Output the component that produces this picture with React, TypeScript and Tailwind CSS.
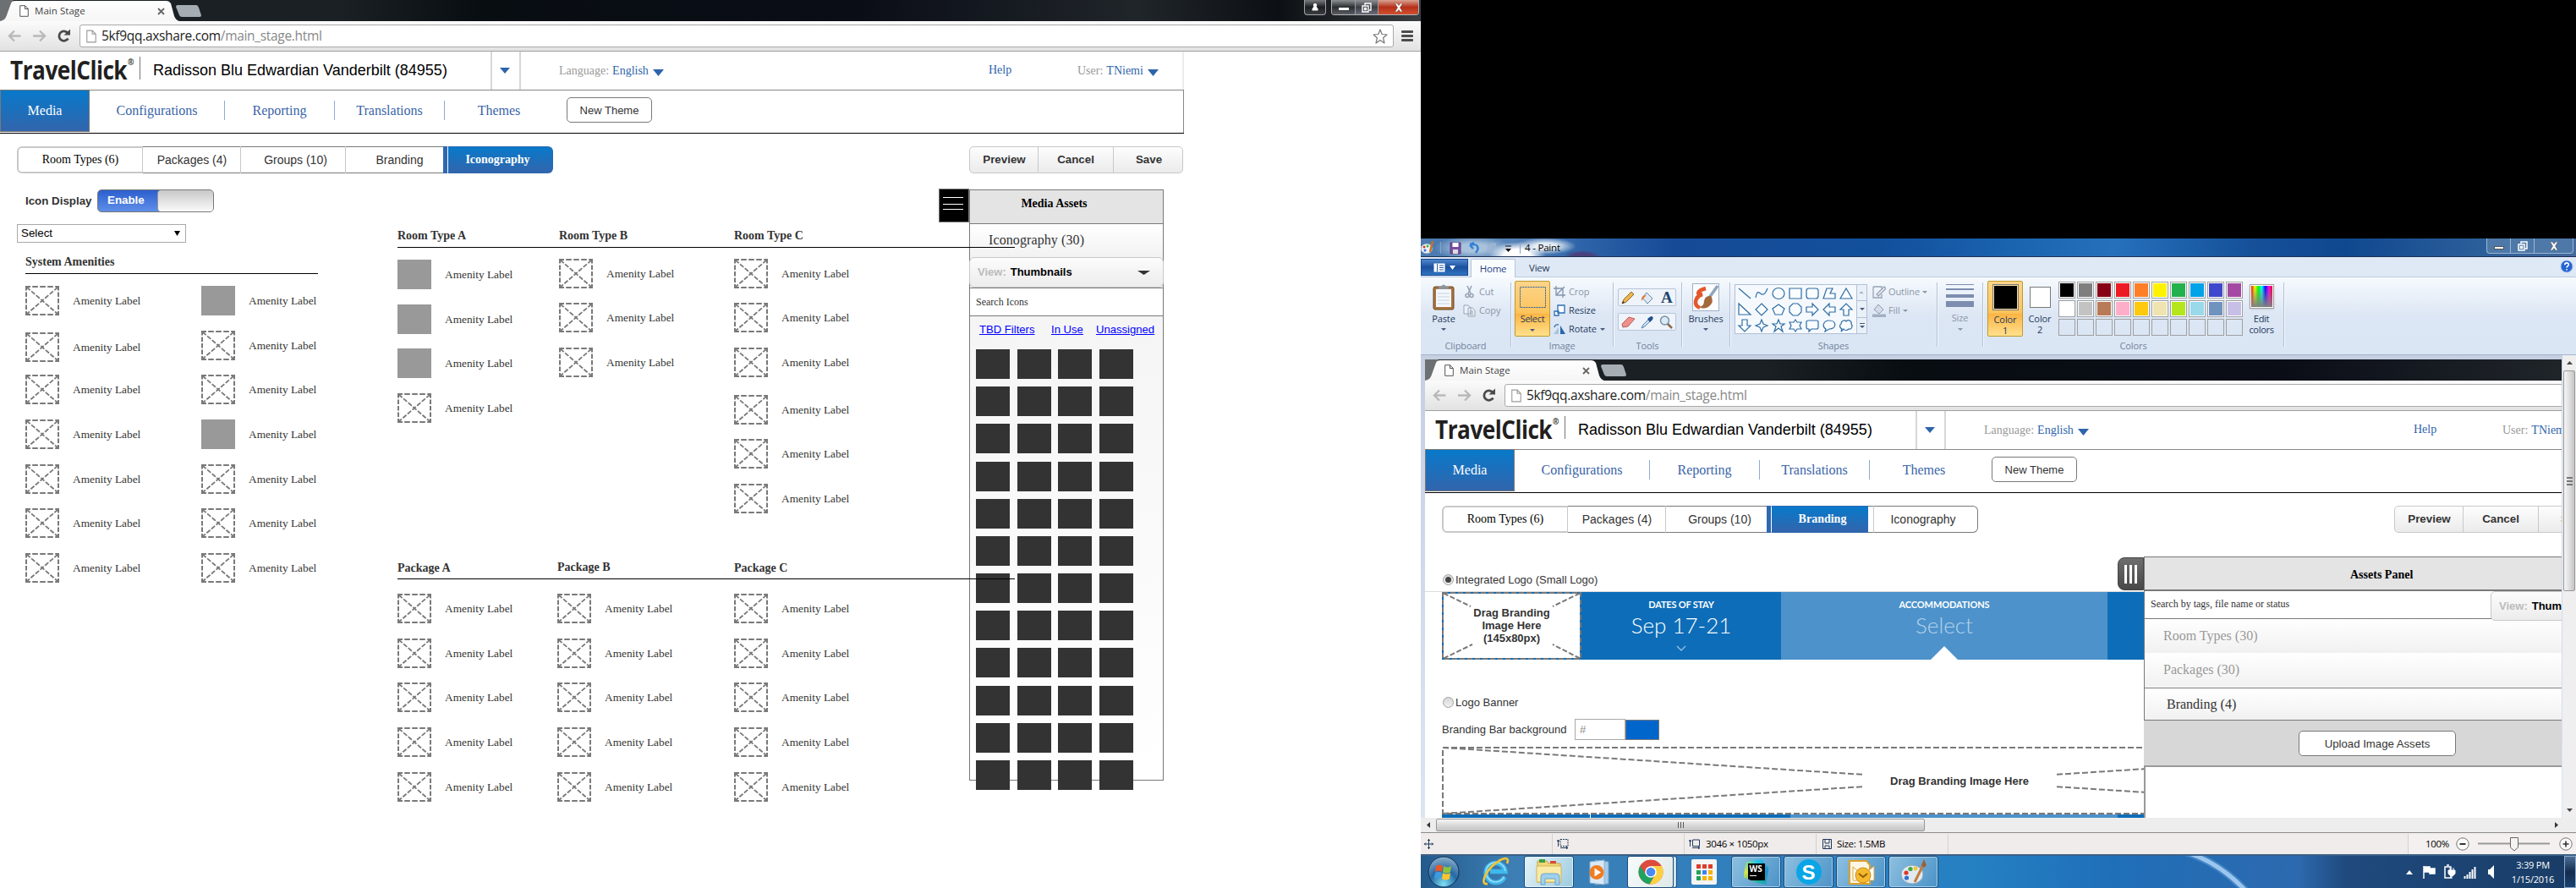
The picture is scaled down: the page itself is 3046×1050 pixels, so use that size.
import React from 'react';

type Kids = { children?: React.ReactNode };

/* ---------- wireframe atoms ---------- */

const Placeholder = () => (
  <svg width="40" height="35" viewBox="0 0 40 35" className="shrink-0" fill="none" stroke="#797979" strokeWidth="2">
    <path d="M1 1H39" strokeDasharray="5 2.2 6.6 2.4 6.6 2.4 6.6 2.4 6.6" />
    <path d="M1 34H39" strokeDasharray="5 2.2 6.6 2.4 6.6 2.4 6.6 2.4 6.6" />
    <path d="M1 0V35M39 0V35" strokeDasharray="5.5 2" />
    <path d="M1.5 1.5L38.5 33.5M38.5 1.5L1.5 33.5" strokeWidth="1.8" strokeDasharray="5.5 1.9" />
  </svg>
);

type Item = { gap: string; solid?: boolean };

const Amenities = ({ items, className }: { items: Item[]; className: string }) => (
  <div className={className}>
    {items.map((it, i) => (
      <div key={i} className={`flex h-[35px] items-center gap-4 ${it.gap}`}>
        {it.solid ? <div className="h-[35px] w-10 shrink-0 bg-[#999999]" /> : <Placeholder />}
        <span className="text-[13.33px] leading-4 whitespace-nowrap text-[#333]">Amenity Label</span>
      </div>
    ))}
  </div>
);

const Caret = ({ w = 12, h = 7, color = '#2e64ab' }: { w?: number; h?: number; color?: string }) => (
  <svg width={w} height={h} viewBox="0 0 12 7" preserveAspectRatio="none" className="shrink-0">
    <path d="M0 0H12L6 7Z" fill={color} />
  </svg>
);

const PageIcon = ({ w = 11, h = 14, stroke = '#555' }: { w?: number; h?: number; stroke?: string }) => (
  <svg width={w} height={h} viewBox="0 0 11 14" fill="#fff" stroke={stroke} className="shrink-0">
    <path d="M.7.7H6.5L10.3 4.5V13.3H.7ZM6.5.7V4.5H10.3" />
  </svg>
);

/* ---------- browser chrome ---------- */

const BrowserChrome = () => (
  <div className="w-[1680px] font-['Open_Sans',sans-serif]">
    <div className="flex h-[25px] items-start bg-[linear-gradient(90deg,#1b2024_0%,#1b2024_24%,#080d12_34%,#0a0d16_60%,#20252a_80%,#0c1014_90%,#3a3f42_100%)]">
      <div className="relative flex h-[25px] w-[212px] shrink-0 items-center">
        <svg width="212" height="25" viewBox="0 0 212 25" className="absolute inset-0">
          <defs>
            <linearGradient id="tabfill" x1="0" y1="0" x2="0" y2="1">
              <stop offset="0" stopColor="#fefefe" />
              <stop offset="1" stopColor="#f6f6f6" />
            </linearGradient>
          </defs>
          <path d="M0 0H16L7 25H0Z" fill="#6d7072" />
          <path d="M0 25C6 24 7 21 9 15L13 4Q14 1 18 1H197Q200 1 202 4L206 19Q208 24 212 25Z" fill="url(#tabfill)" />
          <path d="M187 10L194 17M194 10L187 17" stroke="#666" strokeWidth="1.8" />
        </svg>
        <div className="relative flex items-center gap-[7px] pl-[23px]">
          <PageIcon />
          <span className="text-[11.5px] leading-4 tracking-[0.05px] whitespace-nowrap text-[#444]">Main Stage</span>
        </div>
      </div>
      <svg width="34" height="15" viewBox="0 0 34 15" className="mt-[6px] -ml-[5px] shrink-0">
        <path d="M3 0H25Q27 0 28 3L31 12Q31 14 29 14H8Q6 14 5 12L1 2Q1 0 3 0Z" fill="#a6adb3" />
      </svg>
      <div className="ml-auto flex h-[18px] gap-[6px] pr-[2px]">
        <div className="flex h-[18px] w-[26px] items-center justify-center rounded-b-[4px] border border-t-0 border-[#a0a4a8] bg-[linear-gradient(#777b7e,#1c1f22_50%,#3a3d40)]">
          <svg width="10" height="11" viewBox="0 0 10 11">
            <path d="M5 1A2 2 0 0 1 6.5 4.5L8.5 7.5V9.5H1.5V7.5L3.5 4.5A2 2 0 0 1 5 1Z" fill="#fff" />
          </svg>
        </div>
        <div className="flex h-[18px] w-[104px] overflow-hidden rounded-b-[4px] border border-t-0 border-[#b0b3b6]">
          <div className="flex w-[28px] items-center justify-center border-r border-[#9a9da0] bg-[linear-gradient(#8d9093,#2b2e31_50%,#5a5d63)] pt-1">
            <div className="h-[3px] w-[12px] bg-white" />
          </div>
          <div className="flex w-[27px] items-center justify-center border-r border-[#9a9da0] bg-[linear-gradient(#8d9093,#3b3e45_50%,#6a6d78)]">
            <svg width="12" height="12" viewBox="0 0 12 12" fill="none" stroke="#fff" strokeWidth="1.4">
              <path d="M4 3V1H11V9H9M1 4H8V11H1ZM3.5 6.5H5.5V8.5H3.5Z" />
            </svg>
          </div>
          <div className="flex flex-1 items-center justify-center bg-[linear-gradient(#d9a293,#b5301a_50%,#d2512f)]">
            <svg width="12" height="10" viewBox="0 0 12 10">
              <path d="M1.5 0H4L6 2.5 8 0H10.5L7.5 5 10.5 10H8L6 7.5 4 10H1.5L4.5 5Z" fill="#fff" stroke="#5b3a36" strokeWidth=".5" />
            </svg>
          </div>
        </div>
      </div>
    </div>
    <div className="flex h-9 items-start border-b border-[#a0a0a0] bg-[linear-gradient(#fbfbfb,#e2e2e2)] pt-1">
      <svg width="94" height="27" viewBox="0 0 94 27" className="shrink-0" fill="none">
        <path d="M24.5 13.5H11.5M17 7.5L11 13.5L17 19.5" stroke="#b9b9b9" strokeWidth="2.4" />
        <path d="M39 13.5H52.5M47 7.5L53 13.5L47 19.5" stroke="#b9b9b9" strokeWidth="2.4" />
        <path d="M80.5 16.5A5.7 5.7 0 1 1 80 10" stroke="#4a4a4a" strokeWidth="2.8" />
        <path d="M83 5.500V12.500H75.500Z" fill="#4a4a4a" />
      </svg>
      <div className="flex h-[27px] w-[1554px] items-center rounded-[3px] border border-[#aaaaaa] bg-white pr-[6px] pl-[7px]">
        <PageIcon w={12} h={16} stroke="#999" />
        <span className="-mt-px ml-[6px] text-[15.5px] leading-5 tracking-[-0.32px] whitespace-nowrap text-[#222]">
          5kf9qq.axshare.com<span className="text-[#888]">/main_stage.html</span>
        </span>
        <svg width="18" height="18" viewBox="0 0 18 18" className="ml-auto" fill="none" stroke="#777" strokeWidth="1.2" strokeLinejoin="round">
          <path d="M9 1L11.200 6.500 17 7 12.600 10.800 14 17 9 13.600 4 17 5.400 10.800 1 7 6.800 6.500Z" />
        </svg>
      </div>
      <div className="mt-[7px] ml-[9px] flex w-[14px] flex-col gap-[2px]">
        <div className="h-[3px] rounded-[1px] bg-[#4c4c4c]" />
        <div className="h-[3px] rounded-[1px] bg-[#4c4c4c]" />
        <div className="h-[3px] rounded-[1px] bg-[#4c4c4c]" />
      </div>
    </div>
  </div>
);

/* ---------- TravelClick page ---------- */

const SiteHeader = () => (
  <div className="flex h-[45px] w-[1400px] border-r-2 border-[#ececec] bg-white font-['Liberation_Serif',serif] text-[14px]">
    <div className="w-[165px] shrink-0 pl-3">
      <div className="flex w-[190px] origin-left scale-x-[0.89] font-['Open_Sans',sans-serif] text-[#221f20]">
        <span className="mt-1 text-[29.500px] leading-9 font-bold tracking-[-0.6px]">TravelClick</span>
        <span className="mt-[6px] ml-px text-[10px] leading-3 font-bold">®</span>
      </div>
    </div>
    <div className="mt-[6px] h-[27px] w-px bg-[#777]" />
    <div className="w-[414px] shrink-0 pl-[15px] font-['Liberation_Sans',sans-serif] text-[18px] leading-[44px] text-black">
      Radisson Blu Edwardian Vanderbilt (84955)
    </div>
    <div className="flex w-9 shrink-0 items-center justify-center border-x-2 border-[#d7d7d7] pr-[3px]">
      <Caret />
    </div>
    <div className="flex w-[553px] shrink-0 items-center pl-[45px] leading-5 text-[#999]">
      Language:<span className="ml-1 text-[#2e64ab]">English</span>
      <span className="mt-[5px] ml-[5px]">
        <Caret w={13} h={8} />
      </span>
    </div>
    <div className="w-[105px] shrink-0 leading-[43px] text-[#2e64ab]">Help</div>
    <div className="flex items-center leading-5 text-[#999]">
      User:<span className="ml-1 text-[#2e64ab]">TNiemi</span>
      <span className="mt-[5px] ml-[5px]">
        <Caret w={13} h={8} />
      </span>
    </div>
  </div>
);

const NavItem = ({ children }: Kids) => (
  <div className="w-[130px] border-r border-[#8faad2] text-center leading-[23px]">{children}</div>
);

const SiteNav = () => (
  <div className="w-[1400px] border-b border-black bg-white">
    <div className="flex h-[51px] border-t border-r border-[#888] font-['Liberation_Serif',serif] text-[16px] text-[#3a64a8]">
      <div className="-mt-px h-[50px] w-[106px] border border-[#797979] bg-[linear-gradient(#0879ca,#3265ac)] text-center leading-[47px] text-white">
        Media
      </div>
      <div className="mt-3 h-[23px] w-[160px] border-r border-[#8faad2] text-center leading-[23px]">Configurations</div>
      <div className="mt-3 flex h-[23px]">
        <NavItem>Reporting</NavItem>
        <NavItem>Translations</NavItem>
        <div className="w-[128px] text-center leading-[23px]">Themes</div>
      </div>
      <div className="mt-2 ml-4 h-[30px] w-[101px] rounded-[5px] border border-[#797979] text-center font-['Liberation_Sans',sans-serif] text-[13px] leading-[29px] text-[#333]">
        New Theme
      </div>
    </div>
  </div>
);

const SubNav = ({ active }: { active: 'Branding' | 'Iconography' }) => (
  <div className="mt-[15px] flex h-8 w-[1399px] pl-5 text-center font-['Liberation_Sans',sans-serif] text-[14px] leading-[31px] text-[#333]">
    <div className="w-[149px] rounded-l-[6px] border-2 border-r border-[#c8c8c8] font-['Liberation_Serif',serif] leading-[27px] text-black">
      Room Types (6)
    </div>
    <div className="w-[116px] border-y border-[#797979]">Packages (4)</div>
    {active === 'Iconography' ? (
      <>
        <div className="w-[124px] border-y border-[#797979] pl-[5px] shadow-[-1px_0_0_#c8c8c8]">Groups (10)</div>
        <div className="w-[115px] border-y border-[#797979] pl-[12px] shadow-[-1px_0_0_#c8c8c8]">Branding</div>
        <div className="w-[5px] bg-[#2e68b0]" />
        <div className="w-[125px] rounded-r-[6px] border border-l-white border-[#2e68b0] bg-[linear-gradient(#0879ca,#3265ac)] pr-[6px] font-['Liberation_Serif',serif] leading-[29px] font-bold text-white">
          Iconography
        </div>
      </>
    ) : (
      <>
        <div className="w-[119px] border-y border-[#797979] pl-[8px] shadow-[-1px_0_0_#c8c8c8]">Groups (10)</div>
        <div className="w-[5px] bg-[#2e68b0]" />
        <div className="w-[115px] border-y border-l border-[#2e68b0] border-l-white bg-[linear-gradient(#0879ca,#3265ac)] pl-[6px] font-['Liberation_Serif',serif] leading-[29px] font-bold text-white">
          Branding
        </div>
        <div className="w-[6px] border-y border-[#797979]" />
        <div className="w-[124px] rounded-r-[6px] border border-l-[#c8c8c8] border-[#797979] pr-[6px] leading-[30px]">Iconography</div>
      </>
    )}
    <div className="ml-auto flex w-[253px] rounded-[5px] border border-[#c8c8c8] bg-[linear-gradient(#fdfdfd,#ebebeb)] text-[13.33px] leading-[30px] font-bold text-[#333]">
      <div className="w-[81px] border-r border-[#c8c8c8] pl-px">Preview</div>
      <div className="w-[89px] border-r border-[#c8c8c8]">Cancel</div>
      <div className="flex-1 pl-[2px]">Save</div>
    </div>
  </div>
);

/* ---------- iconography tab ---------- */

const leftCol: Item[] = [{ gap: '' }, { gap: 'mt-5' }, { gap: 'mt-[15px]' }, { gap: 'mt-[18px]' }, { gap: 'mt-[18px]' }, { gap: 'mt-[17px]' }, { gap: 'mt-[18px]' }];
const rightCol: Item[] = [
  { gap: '', solid: true },
  { gap: 'mt-[18px]' },
  { gap: 'mt-[17px]' },
  { gap: 'mt-[18px]', solid: true },
  { gap: 'mt-[18px]' },
  { gap: 'mt-[17px]' },
  { gap: 'mt-[18px]' },
];
const roomA: Item[] = [{ gap: '', solid: true }, { gap: 'mt-[18px]', solid: true }, { gap: 'mt-[17px]', solid: true }, { gap: 'mt-[18px]' }];
const roomB: Item[] = [{ gap: '' }, { gap: 'mt-[17px]' }, { gap: 'mt-[18px]' }];
const roomC: Item[] = [...roomB, { gap: 'mt-[21px]' }, { gap: 'mt-[17px]' }, { gap: 'mt-[18px]' }];
const packs: Item[] = [{ gap: '' }, { gap: 'mt-[18px]' }, { gap: 'mt-[17px]' }, { gap: 'mt-[18px]' }, { gap: 'mt-[18px]' }];
const tileGaps = ['', 'mt-[9px]', 'mt-[9px]', 'mt-[10px]', 'mt-[9px]', 'mt-[9px]', 'mt-[9px]', 'mt-[9px]', 'mt-[9px]', 'mt-[10px]', 'mt-[9px]', 'mt-[9px]'];

const MediaPanel = () => (
  <div className="flex font-['Liberation_Serif',serif]">
    <div className="mt-[18px] h-10 w-9 shrink-0 border border-[#797979] bg-black pt-[9px] pl-1">
      <div className="h-px w-6 bg-white" />
      <div className="mt-[7px] h-px w-6 bg-white" />
      <div className="mt-[5px] h-px w-6 bg-white" />
    </div>
    <div className="mt-[19px] h-[699px] w-[230px] border border-[#797979] bg-[linear-gradient(#f2f2f2,#ffffff)]">
      <div className="h-10 border-b border-[#797979] bg-[#e4e4e4] pr-[29px] text-center text-[14px] leading-[32px] font-bold text-black">
        Media Assets
      </div>
      <div className="h-[39px] bg-[linear-gradient(#ffffff,#f2f2f2)] pl-[22px] text-[16px] leading-[38px] tracking-[0.1px] text-[#333]">Iconography (30)</div>
      <div className="-mx-px flex h-9 items-center rounded-[6px] border border-[#c8c8c8] bg-[linear-gradient(#fcfcfc,#ececec)] pr-[15px] pl-[9px] font-['Liberation_Sans',sans-serif] text-[13px] leading-5 font-bold text-[#bbb]">
        View:<span className="ml-[5px] text-black">Thumbnails</span>
        <span className="ml-auto">
          <Caret w={15} h={5} color="#333" />
        </span>
      </div>
      <div className="h-[34px] border-y border-[#797979] bg-white pl-[7px] text-[12px] leading-[33px] text-[#333]">Search Icons</div>
      <div className="flex h-[31px] pl-[11px] font-['Liberation_Sans',sans-serif] text-[13.1px] leading-[31px] text-[#0000ff] underline">
        <span className="w-[85px]">TBD Filters</span>
        <span className="w-[53px]">In Use</span>
        <span>Unassigned</span>
      </div>
      <div className="pt-2 pl-[7px]">
        {tileGaps.map((g, i) => (
          <div key={i} className={`flex h-[35px] ${g}`}>
            <div className="w-10 bg-[#333]" />
            <div className="ml-[9px] w-10 bg-[#333]" />
            <div className="ml-2 w-10 bg-[#333]" />
            <div className="ml-[9px] w-10 bg-[#333]" />
          </div>
        ))}
      </div>
    </div>
  </div>
);

const IconographyTab = () => (
  <div className="flex font-['Liberation_Serif',serif]">
    <div className="w-[470px] shrink-0">
      <div className="mt-[19px] flex h-[27px] items-center pl-[30px] font-['Liberation_Sans',sans-serif] text-[13.33px] font-bold text-[#333]">
        <span className="w-[85px] leading-5">Icon Display</span>
        <div className="flex h-[27px] w-[138px] overflow-hidden rounded-[5px] border border-[#797979] bg-[linear-gradient(#2c5fcf,#5f8fe8)]">
          <span className="w-[70px] pl-[11px] leading-[23px] text-white">Enable</span>
          <div className="flex-1 rounded-l-[4px] border-l border-[#999] bg-[linear-gradient(#c8c8c8,#fbfbfb)]" />
        </div>
      </div>
      <div className="mt-[14px] ml-5 flex h-[22px] w-[200px] items-center justify-between border border-[#a9a9a9] bg-white pr-[6px] pl-1 font-['Liberation_Sans',sans-serif] text-[13.33px] leading-5 text-black">
        Select
        <Caret w={7} h={6} color="#000" />
      </div>
      <div className="mt-3 ml-[30px] w-[346px] border-b border-black pb-[2px] text-[14px] leading-[22px] font-bold text-[#333]">System Amenities</div>
      <div className="mt-[14px] flex pl-[30px]">
        <Amenities items={leftCol} className="w-[208px]" />
        <Amenities items={rightCol} className="" />
      </div>
    </div>
    <div className="w-[640px] shrink-0 pt-[63px] text-[14px] leading-[22px] font-bold text-[#333]">
      <div className="relative z-10 flex w-[730px] border-b border-black pb-[2px]">
        <span className="w-[191px]">Room Type A</span>
        <span className="w-[207px]">Room Type B</span>
        <span>Room Type C</span>
      </div>
      <div className="flex h-[368px] pt-[13px] font-normal">
        <Amenities items={roomA} className="w-[191px] pt-px" />
        <Amenities items={roomB} className="w-[207px]" />
        <Amenities items={roomC} className="" />
      </div>
      <div className="relative z-10 flex w-[730px] border-b border-black pb-px">
        <span className="w-[189px]">Package A</span>
        <span className="-mt-px w-[209px]">Package B</span>
        <span>Package C</span>
      </div>
      <div className="flex pt-[17px] font-normal">
        <Amenities items={packs} className="w-[189px]" />
        <Amenities items={packs} className="w-[209px]" />
        <Amenities items={packs} className="" />
      </div>
    </div>
    <MediaPanel />
  </div>
);

/* ---------- branding tab ---------- */

const Radio = ({ on }: { on?: boolean }) => (
  <div className="flex size-[13px] items-center justify-center rounded-full border border-[#a0a0a0] bg-[linear-gradient(#d8d8d8,#f0f0f0)]">
    {on && <div className="size-[7px] rounded-full bg-[#444]" />}
  </div>
);

const BrandingTab = () => (
  <div className="flex font-['Liberation_Sans',sans-serif] text-[13px] text-[#333]">
    <div className="w-[850px] shrink-0 overflow-hidden">
      <div className="mt-[46px] flex h-[23px] items-start gap-[2px] pt-[3px] pl-[21px] leading-[14px]">
        <Radio on />
        <span>Integrated Logo (Small Logo)</span>
      </div>
      <div className="h-px bg-[#dcdcdc]" />
      <div className="flex h-20 pl-5 font-['Lato',sans-serif] text-white">
        <div className="relative flex w-[165px] flex-col justify-center bg-[#0e6db8] pb-[2px] text-center font-['Liberation_Sans',sans-serif] text-[13px] leading-[15px] font-bold text-[#333]">
          <svg width="165" height="80" viewBox="0 0 165 80" className="absolute inset-0" fill="none" stroke="#797979">
            <rect x="2" y="2" width="161" height="76" fill="#fff" stroke="none" />
            <rect x="1" y="1" width="163" height="78" strokeWidth="2" strokeDasharray="6 3" />
            <path d="M2 1.500L34 17M163 1.500L131 17M2 78.500L36 62M163 78.500L131 62" strokeWidth="2" strokeDasharray="6 2.500" />
          </svg>
          <span className="relative">Drag Branding</span>
          <span className="relative">Image Here</span>
          <span className="relative">(145x80px)</span>
        </div>
        <div className="flex w-[236px] flex-col items-center bg-[#0e6db8] pt-[7px]">
          <span className="text-[11px] leading-4 font-bold tracking-[-0.2px]">DATES OF STAY</span>
          <span className="text-[26px] leading-8 font-light">Sep 17-21</span>
          <svg width="12" height="7" viewBox="0 0 12 7" className="mt-2" fill="none" stroke="#8cc0ea" strokeWidth="1.4">
            <path d="M1 1L6 6L11 1" />
          </svg>
        </div>
        <div className="flex w-[386px] flex-col items-center bg-[#4d92ca] pt-[7px]">
          <span className="text-[11px] leading-4 font-bold tracking-[-0.1px]">ACCOMMODATIONS</span>
          <span className="text-[26px] leading-8 font-light text-[#b5d3ec]">Select</span>
          <svg width="32" height="16" viewBox="0 0 32 16" className="mt-[9px]">
            <path d="M16 0L32 16H0Z" fill="#fff" />
          </svg>
        </div>
        <div className="flex-1 bg-[#0e6db8]" />
      </div>
      <div className="mt-[43px] flex h-[18px] items-start gap-[2px] pt-px pl-[21px] leading-[14px]">
        <Radio />
        <span>Logo Banner</span>
      </div>
      <div className="mt-[9px] flex h-[25px] pl-5 leading-[25px]">
        <span className="w-[157px]">Branding Bar background</span>
        <div className="w-[60px] border border-[#a9a9a9] pl-[5px] leading-[23px] text-[#888]">#</div>
        <div className="mt-px w-10 border border-[#797979] bg-[#0066cc]" />
      </div>
      <div className="relative mt-2 ml-5 flex h-20 w-[1224px] items-center justify-center text-[13px] font-bold">
        <svg width="1224" height="80" viewBox="0 0 1224 80" className="absolute inset-0" fill="none" stroke="#797979" strokeWidth="2">
          <rect x="1" y="1" width="1222" height="78" strokeDasharray="7 3" />
          <path d="M1 1L500 33M1 79L500 47M1223 1L724 33M1223 79L724 47" strokeDasharray="7 3" />
        </svg>
        <span className="relative pt-[2px]">Drag Branding Image Here</span>
      </div>
      <div className="ml-5 flex h-2">
        <div className="w-[175px] bg-[#0e6db8]" />
        <div className="ml-px w-[236px] bg-[#0e6db8]" />
        <div className="w-[387px] bg-[#4d92ca]" />
        <div className="flex-1 bg-[#0e6db8]" />
      </div>
    </div>
    <div className="relative -ml-[31px] flex pt-[28px] font-['Liberation_Serif',serif]">
      <div className="mt-px flex h-[39px] w-[31px] items-center justify-center gap-[3px] rounded-l-[8px] border border-[#444] bg-[linear-gradient(#6e6e6e,#484848)]">
        <div className="h-[22px] w-[3px] bg-white" />
        <div className="h-[22px] w-[3px] bg-white" />
        <div className="h-[22px] w-[3px] bg-white" />
      </div>
      <div className="w-[550px]">
        <div className="h-[41px] border-t border-b-2 border-l border-[#797979] bg-[#e4e4e4] pt-1 pl-1">
          <div className="h-[3px] bg-[radial-gradient(circle,#aaa_35%,transparent_40%)] bg-[length:2px_2px]" />
          <div className="pt-1 pl-[239px] text-[14px] leading-[19px] font-bold text-black">Assets Panel</div>
        </div>
        <div className="flex h-[33px] border-b border-l border-[#797979] bg-white">
          <div className="w-[409px] shrink-0 pl-[7px] text-[12px] leading-[31px]">Search by tags, file name or status</div>
          <div className="relative h-[35px] w-[230px] shrink-0 rounded-[5px] border border-[#c8c8c8] bg-[linear-gradient(#fcfcfc,#ececec)] pl-[9px] text-[13px] leading-[34px] font-bold text-[#bbb] font-['Liberation_Sans',sans-serif]">
            View:<span className="ml-[5px] text-black">Thumbnails</span>
          </div>
        </div>
        <div className="border-l border-[#797979] text-[16px] leading-[40px] text-[#999]">
          <div className="h-10 bg-[linear-gradient(#ffffff,#f1f1f1)] pl-[22px]">Room Types (30)</div>
          <div className="h-10 bg-[linear-gradient(#ffffff,#f1f1f1)] pl-[22px]">Packages (30)</div>
          <div className="mt-px h-[39px] border-y border-[#797979] bg-[linear-gradient(#ffffff,#f1f1f1)] pl-[26px] leading-[37px] text-[#333]">Branding (4)</div>
        </div>
        <div className="h-[55px] border-b-2 border-[#999] bg-[#d7d7d7] pt-3 pl-[183px]">
          <div className="h-[30px] w-[186px] rounded-[5px] border border-[#797979] bg-white text-center font-['Liberation_Sans',sans-serif] text-[13.2px] leading-[29px]">
            Upload Image Assets
          </div>
        </div>
        <div className="h-[70px] border-l-2 border-[#999] bg-white" />
      </div>
    </div>
  </div>
);

/* ---------- Paint window ---------- */

const Sep = () => <div className="mt-[6px] h-[76px] w-px shrink-0 bg-[#b4c1d3] shadow-[1px_0_0_#f5f9fd]" />;

const Group = ({ w, label, children }: Kids & { w: string; label?: string }) => (
  <div className={`flex h-[90px] shrink-0 flex-col ${w}`}>
    <div className="flex h-[73px]">{children}</div>
    <div className="h-4 text-center leading-4 text-[#72829c]">{label}</div>
  </div>
);

const Down = ({ color = '#45597b' }: { color?: string }) => <Caret w={6} h={3} color={color} />;

const shapePaths = [
  'M-7 -6L7 6', 'M-7 5C-4 -12 0 12 7 -6', 'M-7 0A7 6.500 0 1 0 7 0A7 6.500 0 1 0 -7 0', 'M-7 -6H7V6H-7Z', 'M-4 -6H4Q7 -6 7 -3V3Q7 6 4 6H-4Q-7 6 -7 3V-3Q-7 -6 -4 -6Z', 'M-7 6L-3 -6H4L1 0H7V6Z', 'M0 -6L7 6H-7Z',
  'M-7 -7V6H7Z', 'M0 -7L7 0L0 7L-7 0Z', 'M0 -6L7 -1L4 6H-4L-7 -1Z', 'M-3 -7H3L7 -3V3L3 7H-3L-7 3V-3Z', 'M-7 -3H0V-7L7 0L0 7V3H-7Z', 'M7 -3H0V-7L-7 0L0 7V3H7Z', 'M-3 7V0H-7L0 -7L7 0H3V7Z',
  'M-3 -7V0H-7L0 7L7 0H3V-7Z', 'M0 -7L2 -2L7 0L2 2L0 7L-2 2L-7 0L-2 -2Z', 'M0 -7L2 -2H7L3 1L5 7L0 3L-5 7L-3 1L-7 -2H-2Z', 'M0 -7L2 -4H7L5 0L7 4H2L0 7L-2 4H-7L-5 0L-7 -4H-2Z', 'M-5 -6H5Q7 -6 7 -4V2Q7 4 5 4H-1L-4 7V4H-5Q-7 4 -7 2V-4Q-7 -6 -5 -6Z', 'M-4 4C-9 1 -7 -6 0 -6C9 -6 9 4 0 4L-5 7Z', 'M-5 4C-9 2 -7 -2 -6 -2C-6 -6 -2 -7 0 -5C3 -8 7 -5 6 -2C8 0 7 5 3 4C1 6 -2 6 -3 4L-6 7Z',
];

const swatches = [
  ['bg-[#000000]', 'bg-[#7f7f7f]', 'bg-[#880015]', 'bg-[#ed1c24]', 'bg-[#ff7f27]', 'bg-[#fff200]', 'bg-[#22b14c]', 'bg-[#00a2e8]', 'bg-[#3f48cc]', 'bg-[#a349a4]'],
  ['bg-[#ffffff]', 'bg-[#c3c3c3]', 'bg-[#b97a57]', 'bg-[#ffaec9]', 'bg-[#ffc90e]', 'bg-[#efe4b0]', 'bg-[#b5e61d]', 'bg-[#99d9ea]', 'bg-[#7092be]', 'bg-[#c8bfe7]'],
];

const PaintTitle = () => (
  <div className="flex h-[22px] shrink-0 items-center border-b border-[#1c3056] bg-[radial-gradient(ellipse_34px_16px_at_114px_20px,#ffffff_45%,transparent),radial-gradient(ellipse_22px_7px_at_191px_21px,#4a3f7c_50%,transparent),radial-gradient(ellipse_36px_10px_at_148px_9px,#e3edf5_35%,transparent),radial-gradient(ellipse_46px_14px_at_62px_11px,#a9c2dc_35%,transparent),linear-gradient(90deg,#4a79b0_0%,#5683b8_8%,#2d63a8_14%,#164a96_22%,#12509c_40%,#1b65b0_52%,#2670bb_60%,#155099_72%,#10488f_80%,#2c5f9a_92%,#44699b_100%)]">
    <svg width="118" height="20" viewBox="0 0 118 20" className="shrink-0" fill="none">
      <ellipse cx="7" cy="11" rx="7" ry="6" fill="#e8f0f6" stroke="#7795b3" />
      <circle cx="4" cy="9" r="1.500" fill="#d33" /><circle cx="8" cy="8" r="1.500" fill="#3b3" /><circle cx="5" cy="13" r="1.500" fill="#36d" />
      <path d="M14 2L11 15" stroke="#c8702a" strokeWidth="2.500" />
      <path d="M23.500 3V17M117.500 3V17" stroke="#8aa3c4" />
      <path d="M35 4H47V17H35Z" fill="#7a4fa3" stroke="#56367c" /><path d="M37.500 4H44.500V9H37.500Z" fill="#fff" /><path d="M38 12H44V17H38Z" fill="#ddd" />
      <path d="M58 6L63 4M58 7L62 11M59 7C67 4 70 10 65 16" stroke="#2f7fd6" strokeWidth="2.400" />
      <path d="M89 6L84 5M89 7L85 11M88 7C80 4 77 10 82 16" stroke="#9fb4d0" strokeWidth="2.200" />
      <path d="M100 8H107" stroke="#111" /><path d="M100 11H107L103.500 15Z" fill="#111" />
    </svg>
    <span className="ml-[5px] text-[11.500px] leading-4 tracking-[-0.2px] text-black">4 - Paint</span>
    <div className="ml-auto mr-[3px] flex h-[18px] w-[103px] self-start rounded-b-[4px] border border-t-0 border-[#9db6d4] bg-[#4d78a8]">
      <div className="flex w-[28px] items-center justify-center border-r border-[#9db6d4] pt-1"><div className="h-[4px] w-[12px] border border-[#555] bg-white" /></div>
      <div className="flex w-[28px] items-center justify-center border-r border-[#9db6d4]">
        <svg width="12" height="12" viewBox="0 0 12 12" fill="none" stroke="#fff" strokeWidth="1.500"><path d="M4 3V1H11V9H9M1 4H8V11H1ZM3.500 6.500H5.500V8.500H3.500Z" /></svg>
      </div>
      <div className="flex flex-1 items-center justify-center">
        <svg width="12" height="10" viewBox="0 0 12 10"><path d="M1.500 0H4L6 2.500 8 0H10.500L7.500 5 10.500 10H8L6 7.500 4 10H1.500L4.500 5Z" fill="#fff" stroke="#444" strokeWidth=".5" /></svg>
      </div>
    </div>
  </div>
);

const PaintTabs = () => (
  <div className="flex h-6 shrink-0 items-end border-b border-[#bccbde] bg-[#dfe9f5] text-[11.500px] text-[#1e395b]">
    <div className="mb-px flex h-5 w-14 items-center justify-center gap-[5px] border border-[#1a4a92] bg-[linear-gradient(#4f86cc,#1b4f9e_50%,#2f74c0)]">
      <svg width="14" height="11" viewBox="0 0 14 11"><path d="M.5.500H13.500V10.500H.5Z" fill="#fff" /><path d="M4.500 1V10M7 3H12M7 5.500H12M7 8H12" stroke="#2b5ea5" /></svg>
      <Caret w={7} h={5} color="#fff" />
    </div>
    <div className="-mb-px ml-[3px] h-[22px] w-[53px] rounded-t-[2px] border border-b-0 border-[#b4c4da] bg-[#f9fcff] text-center leading-[21px] tracking-[-0.3px] text-[#1f3f86]">Home</div>
    <div className="ml-[16px] leading-[21px] tracking-[-0.2px]">View</div>
    <svg width="16" height="16" viewBox="0 0 16 16" className="mr-[3px] mb-1 ml-auto">
      <circle cx="8" cy="8" r="7" fill="#2563d0" stroke="#9bbcf0" />
      <path d="M5.700 6.200C5.700 3 10.500 3.200 10.300 6C10.200 7.700 8 7.600 8 9.500M8 11V12.500" fill="none" stroke="#fff" strokeWidth="1.600" />
    </svg>
  </div>
);

const PaintRibbon = () => (
  <div className="flex h-[92px] shrink-0 border-b border-[#a3b3ca] bg-[linear-gradient(#f6fafe,#dce6f4_50%,#dae6f4)] text-[11px] tracking-[-0.1px] text-[#1e395b]">
    <Group w="w-[106px]" label="Clipboard">
      <div className="mt-2 ml-[13px] flex w-7 flex-col items-center">
        <svg width="26" height="31" viewBox="0 0 26 31" className="shrink-0">
          <rect x="1" y="3" width="24" height="27" rx="2" fill="#a8743f" stroke="#6e4720" />
          <path d="M4 6H22V27H4Z" fill="#f4f8fc" /><path d="M6 11H20M6 15H20M6 19H20M6 23H20" stroke="#c5d2e2" />
          <path d="M7 6V3H10Q13 -2 16 3H19V6Z" fill="#8d9299" />
        </svg>
        <span className="mt-[2px] leading-4">Paste</span>
        <span className="mt-[3px]"><Down /></span>
      </div>
      <div className="ml-[9px] pt-[6px] text-[#8c96a6]">
        <div className="flex h-[22px] items-center gap-1">
          <svg width="15" height="16" viewBox="0 0 15 16" fill="none" stroke="#97a3b5" strokeWidth="1.600"><path d="M5 1L9 10M10 1L6 10" /><circle cx="5" cy="12.500" r="2" /><circle cx="10" cy="12.500" r="2" /></svg>
          Cut
        </div>
        <div className="flex h-[22px] items-center gap-1">
          <svg width="15" height="15" viewBox="0 0 15 15" fill="#eef2f8" stroke="#97a3b5"><path d="M1 1H6L9 4V11H1ZM6 4H11L14 7V14H6ZM8 8H12M8 10H12M8 12H12" /></svg>
          Copy
        </div>
      </div>
    </Group>
    <Sep />
    <Group w="w-[120px]" label="Image">
      <div className="mt-1 ml-1 flex h-[66px] w-[42px] flex-col items-center rounded-[2px] border border-[#c29b29] bg-[linear-gradient(#fcd48a,#fdc45c_58%,#fcb544_60%,#ffe08d)] pt-[6px]">
        <svg width="31" height="25" viewBox="0 0 31 25" className="shrink-0"><rect x=".5" y=".5" width="30" height="24" fill="none" stroke="#2a5f9e" strokeDasharray="2 1" /></svg>
        <span className="mt-[5px] leading-4 tracking-[-0.3px]">Select</span>
        <span className="mt-[4px]"><Down /></span>
      </div>
      <div className="ml-1 pt-[6px]">
        <div className="flex h-[22px] items-center gap-1 text-[#8c96a6]">
          <svg width="14" height="14" viewBox="0 0 14 14" fill="none" stroke="#8392a8" strokeWidth="1.300"><path d="M3 0V11H14M0 3H11V14M4 10L13 1" /></svg>
          Crop
        </div>
        <div className="flex h-[22px] items-center gap-1">
          <svg width="14" height="14" viewBox="0 0 14 14" fill="#fff" stroke="#2b6cb3" strokeWidth="1.300"><path d="M5 1H13V10H5ZM1 8H6V13H1Z" /></svg>
          Resize
        </div>
        <div className="flex h-[22px] items-center gap-1">
          <svg width="14" height="14" viewBox="0 0 14 14"><path d="M8 3L14 13H8Z" fill="#2767a8" /><path d="M6 5V13H0Z" fill="#a9c3e0" /><path d="M1 5Q2 1 6 2" fill="none" stroke="#2b6cb3" strokeWidth="1.300" /></svg>
          Rotate <Down />
        </div>
      </div>
    </Group>
    <Sep />
    <Group w="w-[80px]" label="Tools">
      <div className="ml-[5px] flex flex-col gap-2 pt-[13px]">
        <div className="flex h-[21px] w-[69px] items-center justify-around rounded-[2px] border border-[#b7c4d8] bg-[#eff4fa]">
          <svg width="16" height="16" viewBox="0 0 16 16"><path d="M1 15L3 10L12 1L15 4L6 13Z" fill="#f0b64a" stroke="#8f6a2a" /><path d="M1 15L2 12L4 14Z" fill="#333" /></svg>
          <svg width="17" height="16" viewBox="0 0 17 16"><path d="M7 2L14 9L8 15L2 8Z" fill="#dfe9f3" stroke="#6685a8" /><path d="M1 12Q0 5 7 5L3 9Z" fill="#e5762c" /></svg>
          <span className="font-['Liberation_Serif',serif] text-[19px] leading-5 font-bold text-[#24456f]">A</span>
        </div>
        <div className="flex h-[21px] w-[69px] items-center justify-around rounded-[2px] border border-[#b7c4d8] bg-[#eff4fa]">
          <svg width="17" height="16" viewBox="0 0 17 16"><path d="M1 10L9 2L16 4L8 13L2 14Z" fill="#ee8f8a" stroke="#b8615f" /></svg>
          <svg width="16" height="16" viewBox="0 0 16 16"><path d="M1 15L3 11L9 5L11 7L5 13Z" fill="#cfe3f4" stroke="#5680ab" /><path d="M8 4L12 1Q16 1 14 5L11 8Z" fill="#22508c" /></svg>
          <svg width="16" height="16" viewBox="0 0 16 16"><circle cx="6.500" cy="6" r="5" fill="#d9ebf8" stroke="#7c8ea5" strokeWidth="1.500" /><path d="M10 10L15 15" stroke="#8a6a4a" strokeWidth="2.500" /></svg>
        </div>
      </div>
    </Group>
    <Sep />
    <Group w="w-[56px]">
      <div className="mt-[7px] flex w-full flex-col items-center">
        <svg width="32" height="33" viewBox="0 0 32 33" className="shrink-0">
          <rect x=".5" y=".5" width="31" height="32" fill="#fbfcfe" stroke="#9fb0c5" />
          <path d="M16 6C5 9 5 14 12 13C3 16 1 26 9 29" fill="none" stroke="#e4572b" strokeWidth="4.500" />
          <path d="M30 3L20 17" stroke="#8fa5bd" strokeWidth="3.500" /><path d="M22 15Q27 22 19 28Q13 31 8 28Q14 27 14 21Q15 14 22 15Z" fill="#a5683a" />
        </svg>
        <span className="mt-px leading-4">Brushes</span>
        <span className="mt-[3px]"><Down /></span>
      </div>
    </Group>
    <Sep />
    <Group w="w-[244px]" label="Shapes">
      <div className="mt-2 ml-[5px] flex h-[59px] w-[157px] border border-[#b0c0d6] bg-[#f5f9fd]">
        <svg width="143" height="57" viewBox="0 0 143 57" fill="#fafdff" stroke="#2e6da4" strokeWidth="1.200">
          {shapePaths.map((d, i) => (
            <path key={i} d={d} fill={i < 2 ? 'none' : undefined} transform={`translate(${11 + (i % 7) * 20} ${10 + Math.floor(i / 7) * 19})`} />
          ))}
        </svg>
        <div className="flex flex-1 flex-col border-l border-[#b0c0d6] bg-[#e9f0f8]">
          <div className="flex flex-1 rotate-180 items-center justify-center"><Down color="#a8b4c6" /></div>
          <div className="flex flex-1 items-center justify-center border-y border-[#b0c0d6]"><Down /></div>
          <div className="flex flex-1 flex-col items-center justify-center gap-[2px]"><div className="h-px w-[6px] bg-[#45597b]" /><Down /></div>
        </div>
      </div>
      <div className="ml-[6px] pt-[6px] text-[#8c96a6]">
        <div className="flex h-[22px] items-center gap-[3px]">
          <svg width="16" height="15" viewBox="0 0 16 15" fill="none" stroke="#97a3b5" strokeWidth="1.300"><path d="M1 1H11V4M11 10V14H1V1M5 10L14 1L16 3L7 12Z" /></svg>
          Outline <Down color="#8c96a6" />
        </div>
        <div className="flex h-[22px] items-center gap-[3px]">
          <svg width="16" height="16" viewBox="0 0 16 16"><path d="M7 1L13 7L8 12L2 7Z" fill="#d4dce8" stroke="#8d9bb0" /><path d="M0 12.500H16V16H0Z" fill="#a3afc0" /></svg>
          Fill <Down color="#8c96a6" />
        </div>
      </div>
    </Group>
    <Sep />
    <Group w="w-[53px]">
      <div className="mt-2 flex w-full flex-col items-center text-[#8c96a6]">
        <div className="h-px w-[33px] bg-[#7c8db0]" />
        <div className="mt-1 h-[2px] w-[33px] bg-[#7c8db0]" />
        <div className="mt-[5px] h-1 w-[33px] bg-[#7c8db0]" />
        <div className="mt-1 h-[7px] w-[33px] bg-[#7c8db0]" />
        <span className="mt-[5px] leading-4">Size</span>
        <span className="mt-[4px]"><Down color="#8c96a6" /></span>
      </div>
    </Group>
    <Sep />
    <Group w="w-[355px]" label="Colors">
      <div className="mt-1 ml-[5px] flex h-[66px] w-[42px] flex-col items-center rounded-[2px] border border-[#c29b29] bg-[linear-gradient(#fcd48a,#fdc45c_58%,#fcb544_60%,#ffe08d)] pt-[3px] text-center leading-[13px]">
        <div className="size-[31px] border border-[#797979] bg-[#fbe0a8] p-px"><div className="h-full bg-black" /></div>
        <span className="mt-[4px]">Color<br />1</span>
      </div>
      <div className="ml-[6px] flex w-[28px] flex-col items-center pt-[11px] text-center leading-[13px]">
        <div className="size-[25px] shrink-0 border border-[#797979] bg-white" />
        <span className="mt-[6px]">Color<br />2</span>
      </div>
      <div className="mt-[5px] ml-2 grid h-[64px] grid-cols-[repeat(10,20px)] grid-rows-[repeat(3,20px)] gap-[2px]">
        {swatches.flat().map((c) => (
          <div key={c} className="border border-[#a0a0a0] bg-white p-px"><div className={`h-full ${c}`} /></div>
        ))}
        {[0, 1, 2, 3, 4, 5, 6, 7, 8, 9].map((n) => (
          <div key={n} className="border border-[#a0a0a0]" />
        ))}
      </div>
      <div className="ml-[5px] flex w-[34px] flex-col items-center pt-2 text-center leading-[13px]">
        <div className="size-[29px] border border-[#a0a0a0] bg-white p-px shadow">
          <div className="h-full bg-[linear-gradient(transparent,#808080),linear-gradient(90deg,#f00,#ff0,#0f0,#0ff,#00f,#f0f,#f00)]" />
        </div>
        <span className="mt-[5px] tracking-[-0.3px]">Edit<br />colors</span>
      </div>
    </Group>
    <Sep />
  </div>
);

const PaintCanvas = () => (
  <div className="flex h-[547px] shrink-0 bg-[linear-gradient(#c6cfe1,#dbe5f2)]">
    <div className="mt-[5px] ml-[5px] h-[542px] w-[1344px] overflow-hidden bg-white">
      <BrowserChrome />
      <SiteHeader />
      <SiteNav />
      <SubNav active="Branding" />
      <BrandingTab />
    </div>
    <div className="ml-auto flex w-4 flex-col items-center bg-[#efefef]">
      <svg width="7" height="4" viewBox="0 0 7 4" className="mt-[7px] shrink-0"><path d="M0 4L3.500 0L7 4Z" fill="#444" /></svg>
      <div className="mt-[7px] flex h-[261px] w-[14px] shrink-0 flex-col items-center justify-center gap-[2px] rounded-[2px] border border-[#979797] bg-[linear-gradient(90deg,#f6f6f6,#dadada_60%,#c4c4c4)]">
        <div className="h-[2px] w-[7px] bg-[#777]" />
        <div className="h-[2px] w-[7px] bg-[#777]" />
        <div className="h-[2px] w-[7px] bg-[#777]" />
      </div>
      <div className="mt-auto mb-[7px]"><Caret w={7} h={4} color="#444" /></div>
    </div>
  </div>
);

const PaintStatus = () => (
  <>
    <div className="flex h-[17px] shrink-0 items-center bg-[#ededed] pl-[7px]">
      <svg width="4" height="7" viewBox="0 0 4 7"><path d="M4 0V7L0 3.500Z" fill="#333" /></svg>
      <div className="ml-[7px] flex h-[15px] w-[578px] items-center justify-center gap-[2px] rounded-[2px] border border-[#979797] bg-[linear-gradient(#f6f6f6,#dadada_50%,#c4c4c4)]">
        <div className="h-[7px] w-px bg-[#555]" />
        <div className="h-[7px] w-px bg-[#555]" />
        <div className="h-[7px] w-px bg-[#555]" />
      </div>
      <svg width="4" height="7" viewBox="0 0 4 7" className="mr-[21px] ml-auto"><path d="M0 0V7L4 3.500Z" fill="#333" /></svg>
    </div>
    <div className="flex h-[26px] shrink-0 items-center border-t border-[#8c8c8c] bg-[#f0eceb] text-[11.500px] tracking-[-0.35px] text-black">
      <div className="flex h-6 w-[156px] items-center border-r border-[#d3d0cf] pl-1">
        <svg width="11" height="12" viewBox="0 0 11 12" fill="none" stroke="#1e395b"><path d="M5.500 0V12M0 6H11M4 2L5.500 .5L7 2M4 10L5.500 11.500L7 10M2 4.500L.5 6L2 7.500M9 4.500L10.500 6L9 7.500" /></svg>
      </div>
      <div className="flex h-6 w-[156px] items-center border-r border-[#d3d0cf] pl-[5px]">
        <svg width="14" height="12" viewBox="0 0 14 12" fill="none" stroke="#1e395b"><path d="M4 .5H13V8.500H4Z" strokeDasharray="2 1" /><path d="M1.500 1V9M0 3L1.500 1L3 3M4 10.500H13M11 9L13 10.500L11 12" /></svg>
      </div>
      <div className="flex h-6 w-[156px] items-center gap-[6px] border-r border-[#d3d0cf] pl-[5px]">
        <svg width="14" height="12" viewBox="0 0 14 12" fill="none" stroke="#1e395b"><path d="M4.500 1H12.500V8.500H4.500Z" /><path d="M1.500 1V9M0 3L1.500 1L3 3M4 10.500H13M11 9L13 10.500L11 12" /></svg>
        <span className="whitespace-nowrap">3046 × 1050px</span>
      </div>
      <div className="flex h-6 w-[156px] items-center gap-[6px] border-r border-[#d3d0cf] pl-[7px]">
        <svg width="11" height="12" viewBox="0 0 11 12" fill="none" stroke="#1e395b"><path d="M.5.500H10.500V11.500H.5ZM3 .5V5H8V.5M3 11V8H8V11" /></svg>
        <span>Size: 1.5MB</span>
      </div>
      <div className="ml-auto flex h-6 w-[199px] items-center border-l border-[#d3d0cf] bg-[#f3f0ef] pl-5">
        <span className="w-[36px]">100%</span>
        <svg width="16" height="16" viewBox="0 0 16 16" fill="#fafafa" stroke="#777"><circle cx="8" cy="8" r="7.200" /><path d="M4.500 8H11.500" stroke="#333" strokeWidth="2" /></svg>
        <svg width="85" height="18" viewBox="0 0 85 18" className="ml-[10px]"><path d="M0 8.500H85" stroke="#9a9a9a" strokeWidth="2" /><path d="M38.500 1.500H47.500V13L43 17L38.500 13Z" fill="#f4f4f4" stroke="#666" /></svg>
        <svg width="16" height="16" viewBox="0 0 16 16" className="ml-[11px]" fill="#fafafa" stroke="#777"><circle cx="8" cy="8" r="7.200" /><path d="M4.500 8H11.500M8 4.500V11.500" stroke="#333" strokeWidth="1.600" /></svg>
      </div>
    </div>
  </>
);

/* ---------- taskbar ---------- */

const TaskButton = ({ active, children }: Kids & { active?: boolean }) =>
  active ? (
    <div className="flex h-[38px] w-[59px] items-center justify-center rounded-[3px] border border-[#1d4c7c] bg-[linear-gradient(120deg,#e6f3f8,#9dcbe0)] shadow-[inset_0_0_0_1px_#dff1fa]">{children}</div>
  ) : (
    <div className="flex h-[38px] w-[59px] items-center justify-center rounded-[3px] border border-[#1d4c7c] bg-[linear-gradient(120deg,#8dc0e0,#4c93c8)] shadow-[inset_0_0_0_1px_#a5d0ea]">{children}</div>
  );

const Taskbar = () => (
  <div className="relative flex h-[40px] shrink-0 items-center overflow-hidden border-t-2 border-[#3c6086] bg-[linear-gradient(90deg,#235a8c_0%,#3d7fb5_8%,#2e7fbe_30%,#2580c2_48%,#1f6fb8_60%,#2d69ae_76%,#1f4a7e_80%,#193c66_100%)] font-['Open_Sans',sans-serif]">
    <svg width="120" height="38" viewBox="0 0 120 38" className="absolute top-0 left-[890px]" fill="none">
      <path d="M-2 -8Q48 0 88 44" stroke="#5f9fdc" strokeWidth="9" opacity=".5" />
      <path d="M-2 -8Q48 0 88 44" stroke="#9cc6ee" strokeWidth="5" />
    </svg>
    <svg width="40" height="38" viewBox="0 0 40 38" className="ml-[7px] shrink-0">
      <defs>
        <radialGradient id="orb" cx=".5" cy=".9" r=".9"><stop offset="0" stopColor="#7fe0f5" /><stop offset=".5" stopColor="#2468a4" /><stop offset="1" stopColor="#8fb0cc" /></radialGradient>
      </defs>
      <circle cx="20" cy="19" r="18" fill="url(#orb)" stroke="#0f2f55" />
      <path d="M11 12Q15 9 19 12L18 19Q14 16 10 19Z" fill="#e9572b" /><path d="M20 12Q25 15 29 12L28 19Q24 22 19 19Z" fill="#8cc63f" />
      <path d="M10 20Q14 17 18 20L17 27Q13 24 9 27Z" fill="#3f9be0" /><path d="M19 20Q24 23 28 20L27 27Q23 30 18 27Z" fill="#fbc52d" />
    </svg>
    <svg width="38" height="38" viewBox="0 0 38 38" className="ml-[23px] shrink-0" fill="none">
      <path d="M29 25A11.500 11.500 0 1 1 30 18.500H12" stroke="#3fb8ec" strokeWidth="5.500" />
      <path d="M28.800 24.500A11.500 11.500 0 1 1 30 18" stroke="#aee6fb" strokeWidth="1.200" />
      <path d="M9 33C-2 35 8 14 24 5C30 2 35 2 32 9" stroke="#f4c431" strokeWidth="2.600" />
    </svg>
    <div className="ml-[14px] flex items-center">
      <TaskButton active>
        <svg width="34" height="32" viewBox="0 0 34 32"><path d="M3 3H14L16 6H30V28H3Z" fill="#f2d675" stroke="#c9a545" /><path d="M5 1H12V5H5Z" fill="#3f9f45" /><path d="M18 3H25V6H18Z" fill="#d94a36" /><path d="M2 9H31V28H2Z" fill="#f9eaa6" stroke="#d2b55a" /><path d="M7 31V22Q7 18 11 18H25Q29 18 29 22V31H24V24H12V31Z" fill="#9fd0ee" stroke="#6ba4cc" /></svg>
      </TaskButton>
    </div>
    <svg width="30" height="34" viewBox="0 0 30 34" className="ml-[15px] shrink-0"><path d="M10 3L26 5V31L10 32Z" fill="#a7cbe8" stroke="#6f9fc6" /><path d="M4 5L21 3V32L4 30Z" fill="#d9e9f5" stroke="#8bb1d0" /><circle cx="12" cy="17.500" r="8.500" fill="#ef7d22" /><path d="M9.500 12.500L17 17.500L9.500 22.500Z" fill="#fff" /></svg>
    <div className="ml-[18px] flex items-center">
      <div className="flex h-[38px] w-[55px] items-center justify-center rounded-[3px] border border-[#1d4c7c] bg-[linear-gradient(120deg,#f7fbfd,#dfe9e6)]">
        <svg width="30" height="30" viewBox="0 0 30 30"><circle cx="15" cy="15" r="14.500" fill="#dd4b3e" /><path d="M2.400 7.800A14.500 14.500 0 0 0 13.500 29.400L20 18L9 18Z" fill="#1ea362" /><path d="M27.800 8H15L20.500 18L13.500 29.400A14.500 14.500 0 0 0 27.800 8Z" fill="#fdd042" /><circle cx="15" cy="15" r="6.800" fill="#fff" /><circle cx="15" cy="15" r="5.300" fill="#4a8af4" /></svg>
      </div>
      <div className="h-[38px] w-1 rounded-r-[3px] border border-l-0 border-[#1d4c7c] bg-[#cfe3ee]" />
    </div>
    <div className="ml-[17px] grid h-[30px] w-[30px] shrink-0 grid-cols-[repeat(3,5px)] content-center justify-center gap-[2px] rounded-[2px] bg-[#f4f4f4]">
      {['bg-[#db3d2e]', 'bg-[#db3d2e]', 'bg-[#db3d2e]', 'bg-[#1fa05a]', 'bg-[#3f7ff0]', 'bg-[#f5b400]', 'bg-[#1fa05a]', 'bg-[#f5b400]', 'bg-[#f5b400]'].map((c, i) => (
        <div key={i} className={`h-[5px] ${c}`} />
      ))}
    </div>
    <div className="ml-[17px] flex items-center gap-[3px]">
      <TaskButton>
        <div className="flex size-[30px] items-center justify-center bg-[conic-gradient(#24c8e8,#1c8fd0,#22b5a0,#d9e34a,#24c8e8)] [clip-path:polygon(10%_10%,70%_0,100%_35%,90%_100%,45%_90%,0_70%)]">
          <div className="flex size-[20px] flex-col bg-black pl-[2px] text-[10px] leading-[12px] font-bold text-white">WS<div className="mt-[2px] h-px w-2 bg-white" /></div>
        </div>
      </TaskButton>
      <TaskButton>
        <div className="size-[30px] rounded-full bg-[#0aa5e6] text-center font-['Liberation_Sans',sans-serif] text-[24px] leading-[31px] font-bold text-white">S</div>
      </TaskButton>
      <TaskButton>
        <svg width="32" height="32" viewBox="0 0 32 32"><path d="M2 3H22L26 8V30H2Z" fill="#fdf6e3" stroke="#dfa02a" strokeWidth="2" /><path d="M6 10L18 20L31 9V26H6Z" fill="#fff" stroke="#d9a53c" /><circle cx="18" cy="20" r="9" fill="#f6b92c" stroke="#c98a15" /><path d="M13 18L18 22L23 18" fill="none" stroke="#8b5a0a" strokeWidth="1.800" /></svg>
      </TaskButton>
      <TaskButton>
        <svg width="32" height="32" viewBox="0 0 32 32"><ellipse cx="14" cy="19" rx="13" ry="11" fill="#dfeaf2" stroke="#8aa5bd" /><circle cx="7" cy="17" r="2.600" fill="#e0372c" /><circle cx="12" cy="12.500" r="2.600" fill="#46a83c" /><circle cx="7.500" cy="23" r="2.600" fill="#2f70d0" /><circle cx="18" cy="12" r="2.400" fill="#f4c431" /><path d="M27 8L17 28" stroke="#c47b3c" strokeWidth="3" /><path d="M25 8L28 1L31 8L28 11Z" fill="#9a6038" /></svg>
      </TaskButton>
    </div>
    <svg width="108" height="18" viewBox="0 0 108 18" className="ml-auto shrink-0" fill="none">
      <path d="M0 12H8L4 7Z" fill="#fff" />
      <path d="M21 2V17M22 3H28V5H34V11H28V9H22Z" stroke="#fff" strokeWidth="1.500" fill="#fff" />
      <path d="M46 3H53V16H46ZM48 1H51" stroke="#fff" strokeWidth="1.500" /><path d="M50 7H58V11Q56 14 54 14T50 11ZM52 4V7M56 4V7M54 14V17" stroke="#fff" fill="#fff" />
      <path d="M69.500 17V14M72.500 17V12M75.500 17V9M78.500 17V6M81.500 17V3" stroke="#fff" strokeWidth="2" />
      <path d="M97 6H99L104 1V17L99 12H97Z" fill="#fff" />
    </svg>
    <div className="ml-[11px] w-[62px] text-center text-[11px] leading-[17px] tracking-[-0.2px] text-white">3:39 PM<br />1/15/2016</div>
    <div className="ml-[6px] h-[38px] w-[14px] border border-[#8fa9c6] bg-[linear-gradient(#4a6c94,#122c50_50%,#1c4270)]" />
  </div>
);

export default function App() {
  return (
    <div className="flex h-[1050px] w-[3046px] overflow-hidden bg-white">
      <div className="w-[1680px] shrink-0 overflow-hidden">
        <BrowserChrome />
        <SiteHeader />
        <SiteNav />
        <SubNav active="Iconography" />
        <IconographyTab />
      </div>
      <div className="flex h-[1050px] w-[1366px] shrink-0 flex-col overflow-hidden bg-black pt-[282px] font-['Open_Sans',sans-serif]">
        <PaintTitle />
        <PaintTabs />
        <PaintRibbon />
        <PaintCanvas />
        <PaintStatus />
        <Taskbar />
      </div>
    </div>
  );
}
